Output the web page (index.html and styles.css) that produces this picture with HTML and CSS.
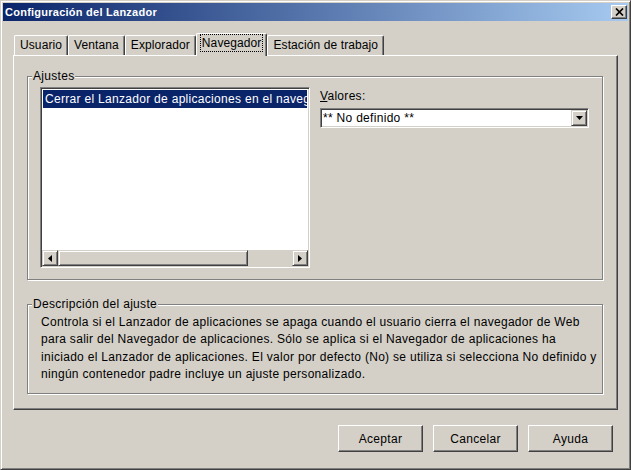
FILE: index.html
```html
<!DOCTYPE html>
<html>
<head>
    <meta charset="utf-8">
    <title>Configuración del Lanzador</title>
    <link rel="stylesheet" href="styles.css">
</head>
<body>
    <div class="window">
        <div class="caption">
            <span class="caption-title">Configuración del Lanzador</span>
            <span class="caption-close raised">
                <svg width="9" height="8" viewBox="0 0 9 8"><path d="M1 0.5 L8 7.5 M8 0.5 L1 7.5" stroke="#000" stroke-width="1.7" fill="none"/></svg>
            </span>
        </div>

        <div class="tabs">
            <div class="tab">Usuario</div>
            <div class="tab">Ventana</div>
            <div class="tab">Explorador</div>
            <div class="tab tab-active"><span class="tab-focus">Navegador</span></div>
            <div class="tab">Estación de trabajo</div>
        </div>

        <div class="panel">
            <fieldset class="group group-settings">
                <legend>Ajustes</legend>
                <div class="settings-body">
                    <div class="listbox sunken">
                        <div class="listbox-items">
                            <div class="listbox-item selected">Cerrar el Lanzador de aplicaciones en el navegador</div>
                        </div>
                        <div class="hscroll">
                            <div class="scroll-btn raised">
                                <svg width="4" height="7" viewBox="0 0 4 7"><path d="M4 0 L0 3.5 L4 7 Z" fill="#000"/></svg>
                            </div>
                            <div class="scroll-thumb raised"></div>
                            <div class="scroll-track"></div>
                            <div class="scroll-btn raised">
                                <svg width="4" height="7" viewBox="0 0 4 7"><path d="M0 0 L4 3.5 L0 7 Z" fill="#000"/></svg>
                            </div>
                        </div>
                    </div>
                    <div class="values">
                        <label class="values-label">Valores:</label>
                        <div class="combo sunken">
                            <span class="combo-text">** No definido **</span>
                            <span class="combo-btn raised">
                                <svg width="7" height="4" viewBox="0 0 7 4"><path d="M0 0 L7 0 L3.5 4 Z" fill="#000"/></svg>
                            </span>
                        </div>
                    </div>
                </div>
            </fieldset>

            <fieldset class="group group-desc">
                <legend>Descripción del ajuste</legend>
                <p class="desc-text">Controla si el Lanzador de aplicaciones se apaga cuando el usuario cierra el navegador de Web<br>para salir del Navegador de aplicaciones. Sólo se aplica si el Navegador de aplicaciones ha<br>iniciado el Lanzador de aplicaciones. El valor por defecto (No) se utiliza si selecciona No definido y<br>ningún contenedor padre incluye un ajuste personalizado.</p>
            </fieldset>
        </div>

        <div class="buttons">
            <button class="btn">Aceptar</button>
            <button class="btn">Cancelar</button>
            <button class="btn">Ayuda</button>
        </div>
    </div>
</body>
</html>
```

FILE: styles.css
```css
body {
  margin: 0;
  font-family: "Liberation Sans", Arial, sans-serif;
  font-size: 12px;
  letter-spacing: 0.3px;
  color: #000;
  background: #d4d0c8;
}

.window {
  box-sizing: border-box;
  width: 631px;
  height: 470px;
  padding: 2px;
  background: #d4d0c8;
  border: 1px solid;
  border-color: #d4d0c8 #404040 #404040 #d4d0c8;
  box-shadow: inset 1px 1px 0 #fff, inset -1px -1px 0 #808080;
}

/* shared 3d borders */
.raised {
  box-sizing: border-box;
  background: #d4d0c8;
  border: 1px solid;
  border-color: #d4d0c8 #404040 #404040 #d4d0c8;
  box-shadow: inset 1px 1px 0 #fff, inset -1px -1px 0 #808080;
}

.sunken {
  box-sizing: border-box;
  background: #fff;
  border: 1px solid;
  border-color: #808080 #fff #fff #808080;
  box-shadow: inset 1px 1px 0 #404040, inset -1px -1px 0 #d4d0c8;
  padding: 1px;
}

/* title bar */
.caption {
  display: flex;
  align-items: center;
  justify-content: space-between;
  height: 18px;
  padding: 0 1px 0 2px;
  background: linear-gradient(to right, #0a246a, #a6caf0);
}

.caption-title {
  color: #fff;
  font-weight: bold;
  font-size: 11px;
  letter-spacing: 0.25px;
}

.caption-close {
  display: flex;
  align-items: center;
  justify-content: center;
  width: 16px;
  height: 14px;
  border-color: #fff #404040 #404040 #fff;
  box-shadow: inset -1px -1px 0 #808080;
}

/* tabs */
.tabs {
  display: flex;
  align-items: flex-end;
  height: 22px;
  margin: 12px 0 0 11px;
}

.tab {
  box-sizing: border-box;
  height: 20px;
  line-height: 19px;
  padding: 0 5px;
  letter-spacing: 0.1px;
  border-top: 1px solid #fff;
  border-left: 1px solid #fff;
  border-right: 1px solid #404040;
  border-radius: 2px 2px 0 0;
  box-shadow: inset -1px 0 0 #808080;
  white-space: nowrap;
}

.tab-active {
  position: relative;
  z-index: 1;
  height: 23px;
  margin-bottom: -1px;
  background: #d4d0c8;
}

.tab-focus {
  outline: 1px dotted #000;
  outline-offset: 1px;
}

/* page */
.panel {
  box-sizing: border-box;
  width: 605px;
  height: 355px;
  margin-left: 10px;
  padding: 13px 14px 0 13px;
  border: 1px solid;
  border-color: #fff #404040 #404040 #fff;
  box-shadow: inset -1px -1px 0 #808080;
}

.group {
  margin: 0;
  min-width: 0;
  border: 1px solid #808080;
  box-shadow: 1px 1px 0 #fff, inset 1px 1px 0 #fff;
}

.group legend {
  padding: 0 1px;
  line-height: 14px;
  background: #d4d0c8;
}

.group-settings {
  padding: 4px 12px 11px 4px;
}

.group-desc {
  margin-top: 17px;
  padding: 3px 12px 10px 4px;
}

.settings-body {
  display: flex;
  margin-left: 8px;
}

/* list */
.listbox {
  display: flex;
  flex-direction: column;
  width: 270px;
  height: 181px;
}

.listbox-items {
  flex: 1;
  padding: 1px;
  overflow: hidden;
}

.listbox-item {
  height: 18px;
  line-height: 18px;
  padding-left: 2px;
  white-space: nowrap;
  overflow: hidden;
}

.listbox-item.selected {
  background: #0a246a;
  color: #fff;
}

.hscroll {
  display: flex;
  height: 16px;
}

.scroll-btn {
  display: flex;
  align-items: center;
  justify-content: center;
  width: 16px;
  height: 16px;
}

.scroll-thumb {
  width: 190px;
  height: 16px;
}

.scroll-track {
  flex: 1;
  background: #d4d0c8;
}

/* values */
.values {
  width: 269px;
  margin-left: 10px;
}

.values-label {
  display: block;
  padding-top: 2px;
  line-height: 14px;
}

.values-label::first-letter {
  text-decoration: underline;
}

.combo {
  display: flex;
  align-items: center;
  height: 20px;
  margin-top: 5px;
}

.combo-text {
  flex: 1;
  padding-left: 1px;
  line-height: 16px;
}

.combo-btn {
  display: flex;
  align-items: center;
  justify-content: center;
  width: 16px;
  height: 16px;
}

.desc-text {
  margin: 0 0 0 9px;
  line-height: 17.3px;
  white-space: nowrap;
}

/* bottom buttons */
.buttons {
  display: flex;
  justify-content: flex-end;
  gap: 10px;
  margin-top: 15px;
  padding-right: 15px;
}

.btn {
  box-sizing: border-box;
  width: 85px;
  height: 27px;
  padding: 0;
  font-family: inherit;
  font-size: 12px;
  letter-spacing: inherit;
  color: #000;
  background: #d4d0c8;
  border: 1px solid;
  border-color: #fff #404040 #404040 #fff;
  box-shadow: inset -1px -1px 0 #808080;
}
```
